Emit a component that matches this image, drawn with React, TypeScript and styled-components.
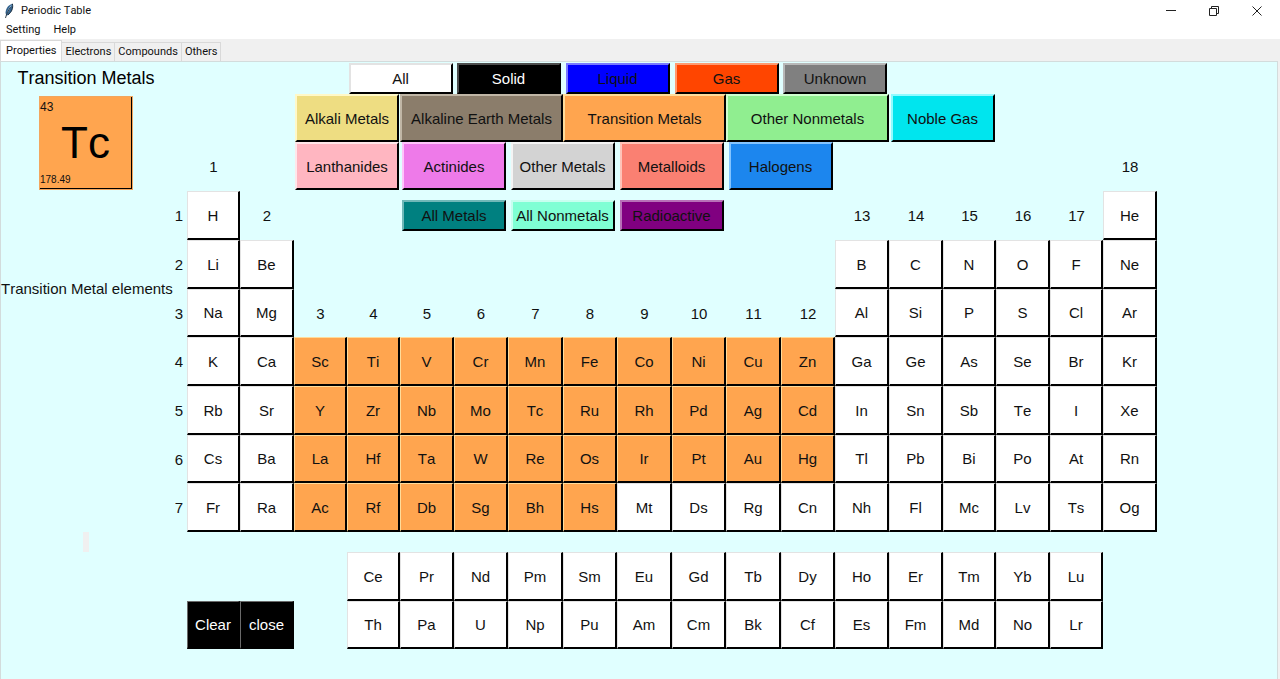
import React, { useState } from 'react';
import styled, { createGlobalStyle } from 'styled-components';

const GlobalStyle = createGlobalStyle`
  * { box-sizing: border-box; }
  body {
    margin: 0;
    background: #f0f0f0;
    color: #111;
    font-family: "Liberation Sans", Arial, sans-serif;
    font-size: 15px;
    font-kerning: none;
  }
  button { font: inherit; font-kerning: none; color: inherit; border: 0; padding: 0; background: none; }
`;

const Window = styled.div`
  display: flex;
  flex-direction: column;
  min-height: 100vh;
`;

const Chrome = styled.header`
  background: #fff;
  font-family: Roboto, "Noto Sans", sans-serif;
  font-size: 11px;
`;

const TitleBar = styled.div`
  display: flex;
  align-items: center;
  height: 21px;
  padding-left: 3px;
`;

const AppName = styled.h1`
  flex: 1;
  margin: 0 0 0 6px;
  font-size: 11px;
  font-weight: 400;
`;

const WindowButton = styled.button`
  display: grid;
  place-items: center;
  width: 43px;
  height: 20px;

  &:last-child {
    margin-right: 2px;
  }
`;

const MenuBar = styled.nav`
  display: flex;
  gap: 13px;
  height: 18px;
  padding-left: 6px;
  line-height: 18px;
`;

const TabStrip = styled.div`
  display: flex;
  align-items: flex-end;
  height: 22px;
  background: #f0f0f0;
  font-family: Roboto, "Noto Sans", sans-serif;
  font-size: 11px;
`;

const Tab = styled.button<{ $active: boolean }>`
  height: ${p => (p.$active ? 21 : 19)}px;
  padding: 0 ${p => (p.$active ? 5 : 3)}px;
  border: 1px solid #d9d9d9;
  border-bottom: 0;
  border-left-width: ${p => (p.$active ? 1 : 0)}px;
  background: ${p => (p.$active ? '#fff' : '#f0f0f0')};
  line-height: 18px;
`;

const Page = styled.main`
  flex: 1;
  margin-right: 2px;
  border: 1px solid #d3dcdc;
  border-bottom: 0;
  background: #e0ffff;
`;

const Table = styled.div`
  display: grid;
  grid-template-columns:
    170px 16px 53px 54px 53px 53px 54px 54px 55px 54px
    55px 54px 55px 54px 54px 54px 53px 54px 53px 54px;
  grid-template-rows:
    32px 48px 49px 49px 49px 48px 49px 49px 48px 49px 20px 49px 48px;
  padding-bottom: 30px;
`;

interface Place {
  $row: number;
  $col: number;
  $cols?: number;
  $rows?: number;
}

const Cell = styled.div<Place>`
  grid-row: ${p => p.$row} / span ${p => p.$rows ?? 1};
  grid-column: ${p => p.$col} / span ${p => p.$cols ?? 1};
  display: grid;
  place-items: center;
  white-space: nowrap;
`;

const Heading = styled(Cell).attrs({ as: 'h2' })`
  margin: 0;
  font-size: 18px;
  font-weight: 400;
  color: #000;
`;

const Key = styled.button<Place & { $fill: string; $edge: string; $ink?: string }>`
  grid-row: ${p => p.$row};
  grid-column: ${p => p.$col} / span ${p => p.$cols ?? 1};
  border-style: solid;
  border-width: 1px 2px 2px 1px;
  border-color: ${p => p.$edge} #000 #000 ${p => p.$edge};
  background: ${p => p.$fill};
  color: ${p => p.$ink ?? '#111'};
  white-space: nowrap;
`;

const FilterKey = styled(Key)<{ $wide?: boolean; $short?: boolean }>`
  justify-self: center;
  align-self: ${p => (p.$short ? 'center' : 'start')};
  width: ${p => (p.$wide ? '163px' : '104px')};
  height: ${p => (p.$short ? 31 : 48)}px;
  border-width: 2px;
`;

const Card = styled.div`
  display: flex;
  flex-direction: column;
  justify-content: space-between;
  width: 94px;
  height: 94px;
  padding: 4px 1px 3px 0;
  border: 1px solid #f2a65e;
  background: #ffa54f;
  box-shadow: inset -1px -1px #000;
  line-height: 12px;
`;

const AtomicNumber = styled.span`
  font-size: 12px;
`;

const CardSymbol = styled.span`
  font-size: 44px;
  text-align: center;
  color: #000;
`;

const Mass = styled.span`
  font-size: 10px;
`;

const Handle = styled.div`
  width: 6px;
  height: 20px;
  background: #f0f0f0;
`;

const filters = [
  { name: 'All', row: 1, col: 6, fill: '#ffffff', edge: '#e3e3e3' },
  { name: 'Solid', row: 1, col: 8, fill: '#000000', edge: '#4d4d4d', ink: '#fff' },
  { name: 'Liquid', row: 1, col: 10, fill: '#0000ff', edge: '#7a7aff' },
  { name: 'Gas', row: 1, col: 12, fill: '#ff4500', edge: '#ff9a70' },
  { name: 'Unknown', row: 1, col: 14, fill: '#808080', edge: '#b8b8b8' },
  { name: 'Alkali Metals', row: 2, col: 5, fill: '#eedd82', edge: '#fff8c8' },
  { name: 'Alkaline Earth Metals', row: 2, col: 7, fill: '#8b7d6b', edge: '#c0b6a6', wide: true },
  { name: 'Transition Metals', row: 2, col: 10, fill: '#ffa54f', edge: '#ffdc9a', wide: true },
  { name: 'Other Nonmetals', row: 2, col: 13, fill: '#90ee90', edge: '#cfffcf', wide: true },
  { name: 'Noble Gas', row: 2, col: 16, fill: '#00e5ee', edge: '#90fbff' },
  { name: 'Lanthanides', row: 3, col: 5, fill: '#ffb6c1', edge: '#ffe6ea' },
  { name: 'Actinides', row: 3, col: 7, fill: '#ee7ae9', edge: '#ffc4fb' },
  { name: 'Other Metals', row: 3, col: 9, fill: '#d3d3d3', edge: '#f4f4f4' },
  { name: 'Metalloids', row: 3, col: 11, fill: '#fa8072', edge: '#ffc3b8' },
  { name: 'Halogens', row: 3, col: 13, fill: '#1c86ee', edge: '#84c4ff' },
  { name: 'All Metals', row: 4, col: 7, fill: '#008080', edge: '#70b8b8' },
  { name: 'All Nonmetals', row: 4, col: 9, fill: '#7fffd4', edge: '#c8fff0' },
  { name: 'Radioactive', row: 4, col: 11, fill: '#800080', edge: '#b870b8' },
];

// Each run of symbols fills consecutive columns from its starting group.
const runs: { row: number; group: number; symbols: string }[] = [
  { row: 4, group: 1, symbols: 'H' },
  { row: 4, group: 18, symbols: 'He' },
  { row: 5, group: 1, symbols: 'Li Be' },
  { row: 5, group: 13, symbols: 'B C N O F Ne' },
  { row: 6, group: 1, symbols: 'Na Mg' },
  { row: 6, group: 13, symbols: 'Al Si P S Cl Ar' },
  { row: 7, group: 1, symbols: 'K Ca Sc Ti V Cr Mn Fe Co Ni Cu Zn Ga Ge As Se Br Kr' },
  { row: 8, group: 1, symbols: 'Rb Sr Y Zr Nb Mo Tc Ru Rh Pd Ag Cd In Sn Sb Te I Xe' },
  { row: 9, group: 1, symbols: 'Cs Ba La Hf Ta W Re Os Ir Pt Au Hg Tl Pb Bi Po At Rn' },
  { row: 10, group: 1, symbols: 'Fr Ra Ac Rf Db Sg Bh Hs Mt Ds Rg Cn Nh Fl Mc Lv Ts Og' },
  { row: 12, group: 4, symbols: 'Ce Pr Nd Pm Sm Eu Gd Tb Dy Ho Er Tm Yb Lu' },
  { row: 13, group: 4, symbols: 'Th Pa U Np Pu Am Cm Bk Cf Es Fm Md No Lr' },
];

const elements = runs.flatMap(({ row, group, symbols }) =>
  symbols.split(' ').map((symbol, i) => ({ symbol, row, group: group + i })),
);

const isTransition = (row: number, group: number) =>
  row >= 7 && row <= 10 && group >= 3 && group <= (row === 10 ? 8 : 12);

const groupRow = (group: number) => {
  if (group === 1 || group === 18) return 3;
  return group === 2 || group > 12 ? 4 : 6;
};

const Feather = () => (
  <svg width="12" height="16" viewBox="0 0 12 16" aria-hidden="true">
    <path d="M9.400 .8C5.800 1.800 2.800 5 2.500 9.800l.8 3C6.800 11.800 10.800 6.500 9.400.8z" fill="#32618c" />
    <path d="M9 1.300C6 3.800 4.200 7.400 3.600 11.600 5.600 8.800 7.600 5 9 1.300z" fill="#8db4d4" />
    <path d="M9.400.8c1 4-.6 8.400-4.400 11" fill="none" stroke="#1c2f40" strokeWidth="1" />
    <path d="M7.600 4.200C5.200 7.200 3.600 10.800 2.500 15" fill="none" stroke="#26323c" strokeWidth="0.9" />
  </svg>
);

export default function App() {
  const [tab, setTab] = useState('Properties');

  return (
    <>
      <GlobalStyle />
      <Window>
        <Chrome>
          <TitleBar>
            <Feather />
            <AppName>Periodic Table</AppName>
            <WindowButton aria-label="Minimize">
              <svg width="10" height="10" viewBox="0 0 10 10" stroke="#222">
                <path d="M0 4.500h10" />
              </svg>
            </WindowButton>
            <WindowButton aria-label="Restore">
              <svg width="10" height="10" viewBox="0 0 10 10" fill="none" stroke="#222">
                <path d="M.5 2.500h7v7h-7zM2.500 2.500v-2h7v7h-2" />
              </svg>
            </WindowButton>
            <WindowButton aria-label="Close">
              <svg width="10" height="10" viewBox="0 0 10 10" stroke="#222">
                <path d="M.5.5l9 9M9.500.5l-9 9" />
              </svg>
            </WindowButton>
          </TitleBar>
          <MenuBar>
            <button>Setting</button>
            <button>Help</button>
          </MenuBar>
        </Chrome>
        <TabStrip role="tablist">
          {['Properties', 'Electrons', 'Compounds', 'Others'].map(name => (
            <Tab
              key={name}
              role="tab"
              aria-selected={tab === name}
              $active={tab === name}
              onClick={() => setTab(name)}
            >
              {name}
            </Tab>
          ))}
        </TabStrip>
        <Page>
          <Table>
            <Heading $row={1} $col={1}>Transition Metals</Heading>
            <Cell $row={2} $rows={2} $col={1}>
              <Card>
                <AtomicNumber>43</AtomicNumber>
                <CardSymbol>Tc</CardSymbol>
                <Mass>178.49</Mass>
              </Card>
            </Cell>
            <Cell $row={5} $rows={2} $col={1}>Transition Metal elements</Cell>
            <Cell $row={11} $col={1}><Handle /></Cell>

            {filters.map(f => (
              <FilterKey
                key={f.name}
                $row={f.row}
                $col={f.col}
                $cols={f.wide ? 3 : 2}
                $wide={f.wide}
                $short={f.row === 1 || f.row === 4}
                $fill={f.fill}
                $edge={f.edge}
                $ink={f.ink}
              >
                {f.name}
              </FilterKey>
            ))}

            {Array.from({ length: 18 }, (_, i) => i + 1).map(group => (
              <Cell key={group} $row={groupRow(group)} $col={group + 2}>{group}</Cell>
            ))}
            {Array.from({ length: 7 }, (_, i) => i + 1).map(period => (
              <Cell key={period} $row={period + 3} $col={2}>{period}</Cell>
            ))}

            {elements.map(({ symbol, row, group }) => {
              const lit = isTransition(row, group);
              return (
                <Key
                  key={symbol}
                  $row={row}
                  $col={group + 2}
                  $fill={lit ? '#ffa54f' : '#fff'}
                  $edge={lit ? '#ffdc9a' : '#e3e3e3'}
                >
                  {symbol}
                </Key>
              );
            })}

            <Key $row={13} $col={3} $fill="#000" $edge="#6a6a6a" $ink="#fff">Clear</Key>
            <Key $row={13} $col={4} $fill="#000" $edge="#6a6a6a" $ink="#fff">close</Key>
          </Table>
        </Page>
      </Window>
    </>
  );
}
